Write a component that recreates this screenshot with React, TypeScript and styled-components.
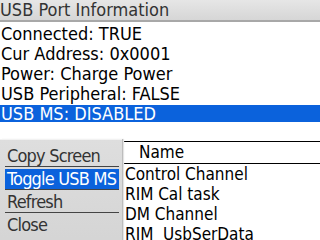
import React from "react";
import styled, { createGlobalStyle } from "styled-components";

const Global = createGlobalStyle`
  html, body { margin: 0; padding: 0; background: #fff; }
  body { font-family: "Liberation Sans Narrow", "DejaVu Sans Condensed", "Liberation Sans", sans-serif; }
`;

const Screen = styled.div`
  position: relative;
  width: 320px;
  height: 240px;
  overflow: hidden;
  background: #fff;
  color: #000;
`;

const TitleBar = styled.div`
  height: 20px;
  line-height: 20px;
  font-size: 18px;
  color: #333;
  background: linear-gradient(#e6e6e6, #d6d6d6);
  border-bottom: 2px solid #a8a8a8;
  white-space: nowrap;
`;

const InfoList = styled.div`
  padding-top: 2px;
  display: flex;
  flex-direction: column;
`;

const InfoRow = styled.div<{ $selected?: boolean }>`
  height: 20px;
  line-height: 20px;
  font-size: 18px;
  padding-left: 1px;
  white-space: nowrap;
  color: ${(p) => (p.$selected ? "#fff" : "#000")};
  background: ${(p) =>
    p.$selected
      ? "linear-gradient(transparent 1px, #0b62dc 1px, #0b62dc 18px, transparent 18px)"
      : "transparent"};
`;

const Table = styled.div`
  margin-top: 17px;
  display: grid;
  grid-template-columns: 123px 1fr;
  border-top: 1px solid #000;
  font-size: 17px;
`;

const Cell = styled.div<{ $first?: boolean; $header?: boolean }>`
  height: ${(p) => (p.$header ? "21px" : "20px")};
  line-height: ${(p) => (p.$header ? "21px" : "20px")};
  padding-left: ${(p) => (p.$header ? "16px" : "2px")};
  border-right: ${(p) => (p.$first ? "1px solid #000" : "none")};
  border-bottom: ${(p) => (p.$header ? "1px solid #000" : "none")};
  white-space: pre;
`;

const Menu = styled.div`
  position: absolute;
  left: 0;
  top: 139px;
  width: 122px;
  height: 110px;
  padding-top: 4px;
  box-sizing: border-box;
  background: linear-gradient(#dedede, #d4d4d4);
  border-top: 1px solid #f2f2f2;
  box-shadow: 1px 0 0 #bdbdbd, 2px 0 1px #e4e4e4;
  display: flex;
  flex-direction: column;
`;

const MenuItem = styled.div<{ $selected?: boolean; $last?: boolean }>`
  height: 23px;
  line-height: 23px;
  box-sizing: border-box;
  margin: 0 3px 0 5px;
  padding-left: 2px;
  font-size: 18px;
  letter-spacing: -0.8px;
  white-space: nowrap;
  overflow: hidden;
  color: ${(p) => (p.$selected ? "#fff" : "#333")};
  background: ${(p) =>
    p.$selected
      ? "linear-gradient(transparent 2px, #0b62dc 2px, #0b62dc 22px, transparent 22px)"
      : "transparent"};
  border-bottom: ${(p) => (p.$last ? "none" : "1px solid #444")};
`;

const info = [
  "Connected: TRUE",
  "Cur Address: 0x0001",
  "Power: Charge Power",
  "USB Peripheral: FALSE",
  "USB MS: DISABLED",
];

const names = ["Control Channel", "RIM Cal task", "DM Channel", "RIM  UsbSerData"];

const menu = ["Copy Screen", "Toggle USB MS", "Refresh", "Close"];

export default function App() {
  return (
    <Screen>
      <Global />
      <TitleBar>USB Port Information</TitleBar>
      <InfoList>
        {info.map((t, i) => (
          <InfoRow key={t} $selected={i === 4}>
            {t}
          </InfoRow>
        ))}
      </InfoList>
      <Table>
        <Cell $first $header />
        <Cell $header>Name</Cell>
        {names.map((n) => (
          <React.Fragment key={n}>
            <Cell $first />
            <Cell>{n}</Cell>
          </React.Fragment>
        ))}
      </Table>
      <Menu>
        {menu.map((m, i) => (
          <MenuItem key={m} $selected={i === 1} $last={i === menu.length - 1}>
            {m}
          </MenuItem>
        ))}
      </Menu>
    </Screen>
  );
}
